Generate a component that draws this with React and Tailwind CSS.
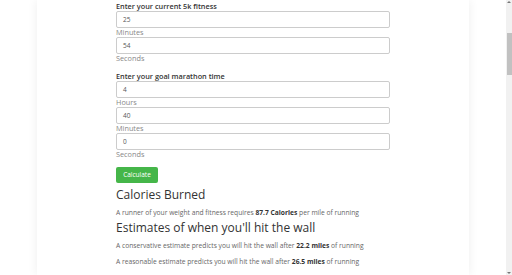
export default function App() {
  const font = { fontFamily: '"Open Sans", "Noto Sans", Arial, sans-serif' };
  const Field = ({ value, label }) => (
    <div className="flex flex-col">
      <div className="h-[17px] w-[274px] border border-[#cccccc] rounded-[2px] flex items-center pl-[6px] text-[6.5px] text-[#555]">
        {value}
      </div>
      <div className="h-[9px] leading-[9px] text-[7.3px] text-[#888]">{label}</div>
    </div>
  );
  return (
    <div className="h-[275px] w-[512px] flex overflow-hidden bg-white" style={font}>
      <div className="flex-1 bg-white flex justify-center">
        <div className="w-[432px] h-full bg-white shadow-[0_0_10px_rgba(0,0,0,0.07)] pl-[79px] pt-[2px] flex flex-col">
          <div className="h-[9px] leading-[9px] text-[7.3px] font-semibold text-[#333]">Enter your current 5k fitness</div>
          <Field value="25" label="Minutes" />
          <Field value="54" label="Seconds" />
          <div className="mt-[9px] h-[9px] leading-[8px] text-[7.3px] font-semibold text-[#333]">Enter your goal marathon time</div>
          <Field value="4" label="Hours" />
          <Field value="40" label="Minutes" />
          <Field value="0" label="Seconds" />
          <div className="mt-[8px] h-[16px] w-[42px] rounded-[2px] bg-[#45b649] text-white text-[6.5px] flex items-center justify-center">Calculate</div>
          <div className="mt-[4px] h-[16px] leading-[16px] text-[12px] text-[#333]">Calories Burned</div>
          <div className="mt-[5px] text-[6.7px] leading-[9px] text-[#666]">
            A runner of your weight and fitness requires <b className="text-[#333]">87.7 Calories</b> per mile of running
          </div>
          <div className="mt-[3px] h-[16px] leading-[16px] text-[12px] text-[#333]">Estimates of when you'll hit the wall</div>
          <div className="mt-[5px] text-[6.7px] leading-[9px] text-[#666]">
            A conservative estimate predicts you will hit the wall after <b className="text-[#333]">22.2 miles</b> of running
          </div>
          <div className="mt-[7px] text-[6.7px] leading-[9px] text-[#666]">
            A reasonable estimate predicts you will hit the wall after <b className="text-[#333]">26.5 miles</b> of running
          </div>
        </div>
      </div>
      <div className="w-[6px] h-full bg-[#f1f1f1] flex flex-col items-center">
        <div className="mt-[1px] w-0 h-0 border-l-[2px] border-r-[2px] border-b-[2px] border-l-transparent border-r-transparent border-b-[#777]" />
        <div className="mt-[30px] w-[5px] h-[42px] bg-[#c1c1c1]" />
        <div className="mt-auto mb-[1px] w-0 h-0 border-l-[2px] border-r-[2px] border-t-[2px] border-l-transparent border-r-transparent border-t-[#777]" />
      </div>
    </div>
  );
}
